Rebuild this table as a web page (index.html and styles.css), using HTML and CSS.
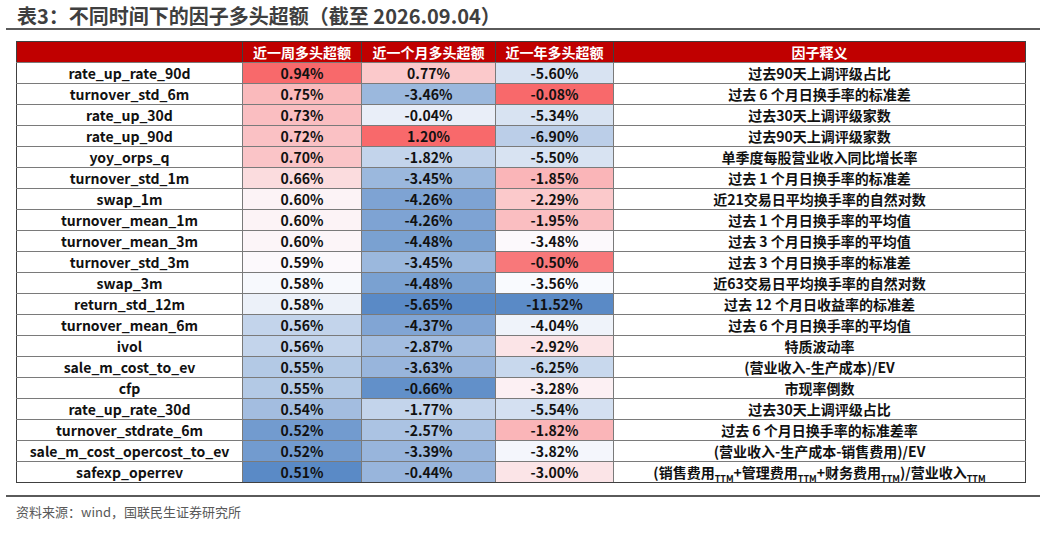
FILE: index.html
```html
<!DOCTYPE html>
<html lang="zh-CN">
<head>
<meta charset="utf-8">
<title>表3</title>
<link rel="stylesheet" href="styles.css">
</head>
<body>
<div class="page">
  <div class="title-bar"><h1 class="title">表3：不同时间下的因子多头超额（截至 2026.09.04）</h1></div>
  <table class="factors">
    <colgroup>
      <col class="c-name"><col class="c-w"><col class="c-m"><col class="c-y"><col class="c-desc">
    </colgroup>
    <thead>
      <tr><th></th><th>近一周多头超额</th><th>近一个月多头超额</th><th>近一年多头超额</th><th>因子释义</th></tr>
    </thead>
    <tbody>
      <tr><td>rate_up_rate_90d</td><td class="r" style="--t:100%">0.94%</td><td class="r" style="--t:35%">0.77%</td><td class="b" style="--t:22%">-5.60%</td><td>过去90天上调评级占比</td></tr>
      <tr><td>turnover_std_6m</td><td class="r" style="--t:45%">0.75%</td><td class="b" style="--t:60%">-3.46%</td><td class="r" style="--t:100%">-0.08%</td><td>过去 6 个月日换手率的标准差</td></tr>
      <tr><td>rate_up_30d</td><td class="r" style="--t:42%">0.73%</td><td class="b" style="--t:12%">-0.04%</td><td class="b" style="--t:22%">-5.34%</td><td>过去30天上调评级家数</td></tr>
      <tr><td>rate_up_90d</td><td class="r" style="--t:40%">0.72%</td><td class="r" style="--t:100%">1.20%</td><td class="b" style="--t:40%">-6.90%</td><td>过去90天上调评级家数</td></tr>
      <tr><td>yoy_orps_q</td><td class="r" style="--t:38%">0.70%</td><td class="b" style="--t:35%">-1.82%</td><td class="b" style="--t:22%">-5.50%</td><td>单季度每股营业收入同比增长率</td></tr>
      <tr><td>turnover_std_1m</td><td class="r" style="--t:22%">0.66%</td><td class="b" style="--t:60%">-3.45%</td><td class="r" style="--t:48%">-1.85%</td><td>过去 1 个月日换手率的标准差</td></tr>
      <tr><td>swap_1m</td><td class="r" style="--t:6%">0.60%</td><td class="b" style="--t:78%">-4.26%</td><td class="r" style="--t:35%">-2.29%</td><td>近21交易日平均换手率的自然对数</td></tr>
      <tr><td>turnover_mean_1m</td><td class="r" style="--t:6%">0.60%</td><td class="b" style="--t:78%">-4.26%</td><td class="r" style="--t:42%">-1.95%</td><td>过去 1 个月日换手率的平均值</td></tr>
      <tr><td>turnover_mean_3m</td><td class="r" style="--t:5%">0.60%</td><td class="b" style="--t:80%">-4.48%</td><td class="r" style="--t:2%">-3.48%</td><td>过去 3 个月日换手率的平均值</td></tr>
      <tr><td>turnover_std_3m</td><td class="r" style="--t:2%">0.59%</td><td class="b" style="--t:60%">-3.45%</td><td class="r" style="--t:90%">-0.50%</td><td>过去 3 个月日换手率的标准差</td></tr>
      <tr><td>swap_3m</td><td class="b" style="--t:3%">0.58%</td><td class="b" style="--t:80%">-4.48%</td><td class="b" style="--t:2%">-3.56%</td><td>近63交易日平均换手率的自然对数</td></tr>
      <tr><td>return_std_12m</td><td class="b" style="--t:10%">0.58%</td><td class="b" style="--t:100%">-5.65%</td><td class="b" style="--t:100%">-11.52%</td><td>过去 12 个月日收益率的标准差</td></tr>
      <tr><td>turnover_mean_6m</td><td class="b" style="--t:35%">0.56%</td><td class="b" style="--t:76%">-4.37%</td><td class="b" style="--t:8%">-4.04%</td><td>过去 6 个月日换手率的平均值</td></tr>
      <tr><td>ivol</td><td class="b" style="--t:35%">0.56%</td><td class="b" style="--t:55%">-2.87%</td><td class="r" style="--t:16%">-2.92%</td><td>特质波动率</td></tr>
      <tr><td>sale_m_cost_to_ev</td><td class="b" style="--t:45%">0.55%</td><td class="b" style="--t:62%">-3.63%</td><td class="b" style="--t:32%">-6.25%</td><td>(营业收入-生产成本)/EV</td></tr>
      <tr><td>cfp</td><td class="b" style="--t:45%">0.55%</td><td class="b" style="--t:95%">-0.66%</td><td class="r" style="--t:8%">-3.28%</td><td>市现率倒数</td></tr>
      <tr><td>rate_up_rate_30d</td><td class="b" style="--t:55%">0.54%</td><td class="b" style="--t:35%">-1.77%</td><td class="b" style="--t:25%">-5.54%</td><td>过去30天上调评级占比</td></tr>
      <tr><td>turnover_stdrate_6m</td><td class="b" style="--t:85%">0.52%</td><td class="b" style="--t:50%">-2.57%</td><td class="r" style="--t:48%">-1.82%</td><td>过去 6 个月日换手率的标准差率</td></tr>
      <tr><td>sale_m_cost_opercost_to_ev</td><td class="b" style="--t:85%">0.52%</td><td class="b" style="--t:62%">-3.39%</td><td class="b" style="--t:5%">-3.82%</td><td>(营业收入-生产成本-销售费用)/EV</td></tr>
      <tr><td>safexp_operrev</td><td class="b" style="--t:100%">0.51%</td><td class="b" style="--t:62%">-0.44%</td><td class="r" style="--t:16%">-3.00%</td><td>(销售费用<sub class="ttm">TTM</sub>+管理费用<sub class="ttm">TTM</sub>+财务费用<sub class="ttm">TTM</sub>)/营业收入<sub class="ttm">TTM</sub></td></tr>
    </tbody>
  </table>
  <div class="source-bar"><p class="source">资料来源：wind，国联民生证券研究所</p></div>
</div>
</body>
</html>
```

FILE: styles.css
```css
html, body {
  margin: 0;
  padding: 0;
  background: #ffffff;
}

.page {
  width: 1050px;
  height: 537px;
  font-family: "Noto Sans CJK SC", "Liberation Sans", sans-serif;
}

.title-bar {
  margin: 0 10px 0 6px;
  border-bottom: 2px solid #5a5a5a;
  padding: 4px 0 0 11px;
  height: 30px;
  box-sizing: border-box;
}

.title {
  margin: 0;
  font-size: 20px;
  line-height: 24px;
  font-weight: 700;
  color: #3f3f3f;
  white-space: nowrap;
}

.factors {
  margin: 11px 0 0 16px;
  border-collapse: collapse;
  table-layout: fixed;
  width: 1009px;
  border: 1px solid #404040;
  font-size: 14px;
  font-weight: 700;
  color: #111111;
}

.c-name { width: 226px; }
.c-w { width: 119px; }
.c-m { width: 134px; }
.c-y { width: 118px; }
.c-desc { width: 412px; }

.factors th,
.factors td {
  height: 20px;
  padding: 0;
  text-align: center;
  vertical-align: middle;
  line-height: 20px;
  white-space: nowrap;
  border: 1px solid #7a7a7a;
}

.factors th {
  background: #c00000;
  color: #ffffff;
  border-color: #404040;
  border-bottom-color: #7a7a7a;
}

.factors th:first-child,
.factors td:first-child {
  border-left-color: #404040;
}

.factors th:last-child,
.factors td:last-child {
  border-right-color: #404040;
}

.factors tbody tr:last-child td {
  border-bottom-color: #404040;
}

.r {
  background: color-mix(in srgb, #f8696b var(--t), #fcfcff);
}

.b {
  background: color-mix(in srgb, #5a8ac6 var(--t), #fcfcff);
}

.ttm {
  font-size: 9px;
  line-height: 0;
  vertical-align: -4px;
}

.source-bar {
  margin: 12px 10px 0 6px;
  border-top: 2px solid #5a5a5a;
  padding: 5px 0 0 10px;
}

.source {
  margin: 0;
  font-size: 13px;
  line-height: 20px;
  font-weight: 400;
  color: #595959;
}
```
